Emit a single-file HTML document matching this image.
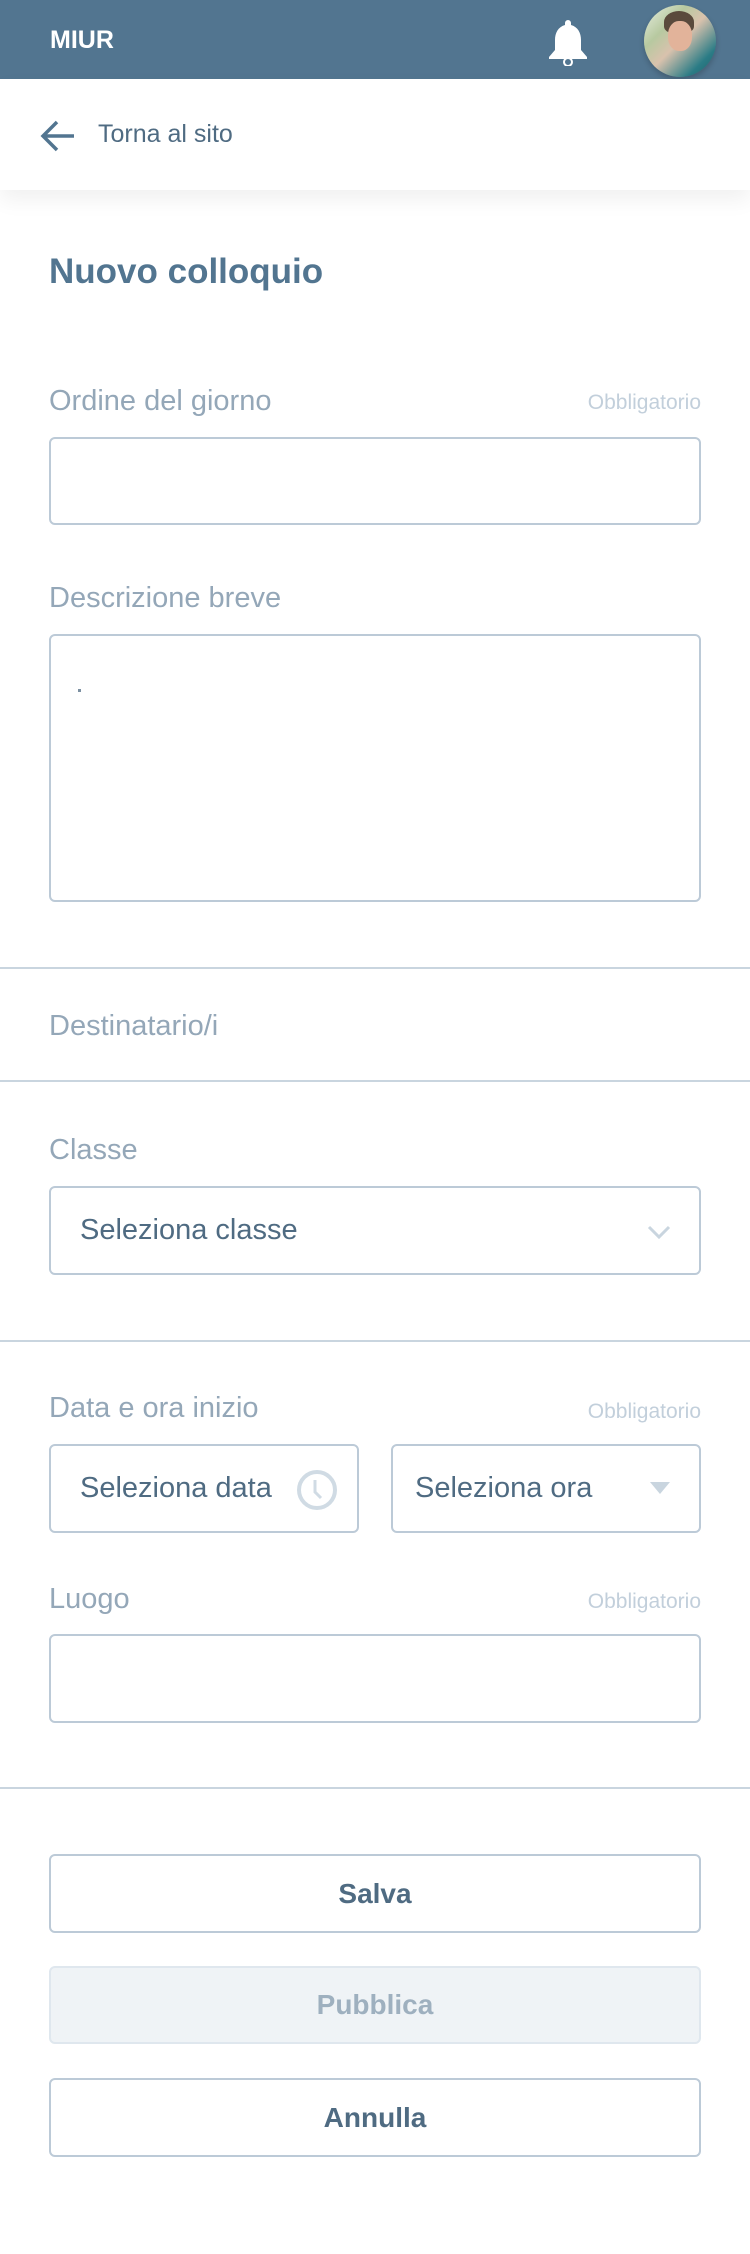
<!DOCTYPE html>
<html><head><meta charset="utf-8"><style>
*{margin:0;padding:0;box-sizing:border-box}
body{width:750px;height:2254px;background:#fff;font-family:"Liberation Sans",sans-serif;position:relative;overflow:hidden;color:#4f6b82}
.a{position:absolute}
.hdr{left:0;top:0;width:750px;height:79px;background:#527590}
.lbl{font-size:29px;color:#94a7b8;line-height:1}
.req{font-size:21px;color:#c2cfdb;line-height:1;right:49px}
.box{border:2px solid #bccad7;border-radius:6px;background:#fff}
.hr{left:0;width:750px;height:2px;background:#c9d5df}
.ph{font-size:29px;color:#4f6b82;line-height:1}
.btn{left:49px;width:652px;border:2px solid #bccad7;border-radius:6px;font-weight:bold;font-size:28px;text-align:center;color:#4f6b82}
</style></head><body>
<div class="a hdr"></div>
<div class="a" style="left:50px;top:26px;font-size:25px;font-weight:bold;color:#fff">MIUR</div>
<svg class="a" style="left:545px;top:18px" width="46" height="48" viewBox="0 0 46 48"><path d="M23 2a3 3 0 0 1 3 3v2c7 2 10 8 10 15v10l6 7v2H4v-2l6-7V22c0-7 3-13 10-15V5a3 3 0 0 1 3-3z" fill="#fff"/><circle cx="23" cy="44" r="4" fill="none" stroke="#fff" stroke-width="2"/></svg>
<div class="a" style="left:644px;top:5px;width:72px;height:72px;border-radius:50%;overflow:hidden;background:linear-gradient(135deg,#e9efe3 0%,#b7c9a0 30%,#d9c2ad 50%,#2b7c86 80%,#1f5f66 100%);box-shadow:0 3px 6px rgba(0,0,0,.2)"><div class="a" style="left:20px;top:6px;width:30px;height:22px;border-radius:50% 50% 30% 30%;background:#5a4a3c"></div><div class="a" style="left:24px;top:16px;width:24px;height:30px;border-radius:45%;background:#e2b39a"></div></div>
<div class="a" style="left:0;top:79px;width:750px;height:111px;background:#fff;box-shadow:0 10px 20px rgba(0,0,0,.06)"></div>
<svg class="a" style="left:40px;top:118px" width="36" height="36" viewBox="0 0 36 36"><path d="M34 18H4M17 4L3 18l14 14" fill="none" stroke="#527590" stroke-width="3.5"/></svg>
<div class="a" style="left:98px;top:120px;font-size:25px;color:#4f6b82">Torna al sito</div>
<div class="a" style="left:49px;top:252px;font-size:35px;font-weight:bold;color:#527590">Nuovo colloquio</div>

<div class="a lbl" style="left:49px;top:387px">Ordine del giorno</div>
<div class="a req" style="top:392px">Obbligatorio</div>
<div class="a box" style="left:49px;top:437px;width:652px;height:88px"></div>

<div class="a lbl" style="left:49px;top:584px">Descrizione breve</div>
<div class="a box" style="left:49px;top:634px;width:652px;height:268px"></div>
<div class="a" style="left:78px;top:689px;width:3px;height:3px;background:#7c90a2"></div>

<div class="a hr" style="top:967px"></div>
<div class="a lbl" style="left:49px;top:1012px">Destinatario/i</div>
<div class="a hr" style="top:1080px"></div>

<div class="a lbl" style="left:49px;top:1136px">Classe</div>
<div class="a box" style="left:49px;top:1186px;width:652px;height:89px"></div>
<div class="a ph" style="left:80px;top:1216px">Seleziona classe</div>
<svg class="a" style="left:647px;top:1224px" width="24" height="16" viewBox="0 0 24 16"><path d="M2 3l10 10L22 3" fill="none" stroke="#c9d5df" stroke-width="3"/></svg>

<div class="a hr" style="top:1340px"></div>

<div class="a lbl" style="left:49px;top:1394px">Data e ora inizio</div>
<div class="a req" style="top:1401px">Obbligatorio</div>
<div class="a box" style="left:49px;top:1444px;width:310px;height:89px"></div>
<div class="a ph" style="left:80px;top:1474px">Seleziona data</div>
<svg class="a" style="left:296px;top:1469px" width="42" height="42" viewBox="0 0 42 42"><circle cx="21" cy="21" r="18" fill="none" stroke="#d0dbe4" stroke-width="4"/><path d="M19 11v12l6 6" fill="none" stroke="#d0dbe4" stroke-width="3"/></svg>
<div class="a box" style="left:391px;top:1444px;width:310px;height:89px"></div>
<div class="a ph" style="left:415px;top:1474px">Seleziona ora</div>
<svg class="a" style="left:650px;top:1482px" width="20" height="12" viewBox="0 0 20 12"><path d="M0 0h20L10 12z" fill="#c9d5df"/></svg>

<div class="a lbl" style="left:49px;top:1585px">Luogo</div>
<div class="a req" style="top:1591px">Obbligatorio</div>
<div class="a box" style="left:49px;top:1634px;width:652px;height:89px"></div>

<div class="a hr" style="top:1787px"></div>

<div class="a btn" style="top:1854px;height:79px;line-height:75px">Salva</div>
<div class="a btn" style="top:1966px;height:78px;line-height:74px;background:#eff3f6;border-color:#dfe7ee;color:#9eb0bf">Pubblica</div>
<div class="a btn" style="top:2078px;height:79px;line-height:75px">Annulla</div>
</body></html>
